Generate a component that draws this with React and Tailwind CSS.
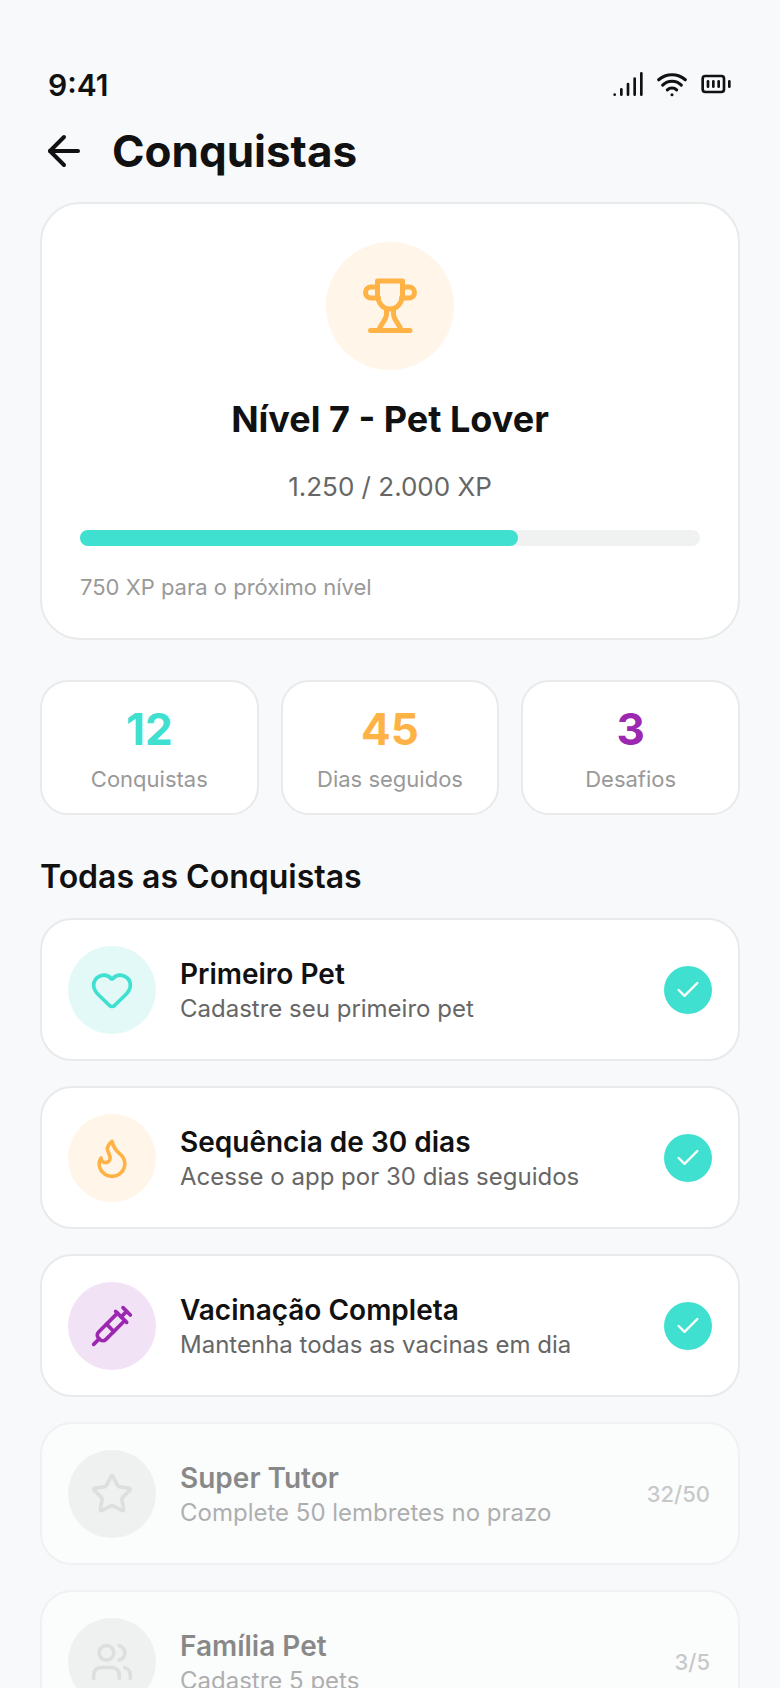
import React from 'react';
import { ArrowLeft, BatteryFull, Check, Flame, Heart, Signal, Star, Syringe, Users, Wifi } from 'lucide-react';

const stats = [
  { value: '12', label: 'Conquistas', color: 'text-[#40e0d0]' },
  { value: '45', label: 'Dias seguidos', color: 'text-[#ffb347]' },
  { value: '3', label: 'Desafios', color: 'text-[#9c27b0]' },
];

const achievements = [
  { title: 'Primeiro Pet', text: 'Cadastre seu primeiro pet', Icon: Heart, circle: 'bg-[#e3f9f7]', tint: 'text-[#40e0d0]' },
  { title: 'Sequência de 30 dias', text: 'Acesse o app por 30 dias seguidos', Icon: Flame, circle: 'bg-[#fff5e8]', tint: 'text-[#ffb347]' },
  { title: 'Vacinação Completa', text: 'Mantenha todas as vacinas em dia', Icon: Syringe, circle: 'bg-[#f1e2f5]', tint: 'text-[#9c27b0]' },
  { title: 'Super Tutor', text: 'Complete 50 lembretes no prazo', Icon: Star, progress: '32/50' },
  { title: 'Família Pet', text: 'Cadastre 5 pets', Icon: Users, progress: '3/5' },
];

// lucide's trophy is wider than the one in the design
const TrophyIcon = () => (
  <svg width="80" height="80" viewBox="0 1 80 80" fill="none" stroke="#ffb347" strokeWidth="5" strokeLinecap="round" strokeLinejoin="round">
    <path d="M27.5 16H52.5V29C52.5 38 47 44 40 44C33 44 27.5 38 27.5 29Z" />
    <path d="M27.5 22H21A5.5 5.5 0 0 0 21 33H28.5" />
    <path d="M52.5 22H59A5.5 5.5 0 0 1 59 33H51.5" />
    <path d="M36.5 45V49C36.5 54 32 58 29.5 63.5" />
    <path d="M43.5 45V49C43.5 54 48 58 50.5 63.5" />
    <path d="M20.5 65.5H60" />
  </svg>
);

const AchievementRow = ({ title, text, Icon, circle, tint, progress }) => (
  <div className={`flex items-center gap-6 rounded-[32px] border-2 border-[#e8eaeb] bg-white px-[26px] h-[143px] shrink-0 ${progress ? 'opacity-50' : ''}`}>
    <div className={`flex h-[88px] w-[88px] shrink-0 items-center justify-center rounded-full ${progress ? 'bg-[#e8e8e8]' : circle}`}>
      <Icon size={44} strokeWidth={2} className={progress ? 'text-[#c4c4c4]' : tint} />
    </div>
    <div className="flex-1 min-w-0 pt-[2px]">
      <div className={`text-[28px] leading-[36px] font-semibold ${progress ? 'text-[#1a1a1a]' : 'text-[#111111]'}`}>{title}</div>
      <div className="text-[24px] leading-[34px] text-[#666666]">{text}</div>
    </div>
    {progress ? (
      <div className="pt-[2px] pr-[2px] text-[22px] font-medium text-[#999999]">{progress}</div>
    ) : (
      <div className="flex h-12 w-12 shrink-0 items-center justify-center rounded-full bg-[#40e0d0]">
        <Check size={28} strokeWidth={2} className="text-white" />
      </div>
    )}
  </div>
);

const App = () => {
  return (
    <div className="h-[1688px] w-[780px] overflow-hidden bg-[#f8f9fa] font-['Inter',sans-serif] text-[#111111]">
      <div className="flex items-center justify-between px-12 pt-[64px] h-[106px]">
        <span className="text-[30px] leading-[36px] font-semibold">9:41</span>
        <div className="flex items-center gap-3 -mt-[2px]">
          <Signal size={32} strokeWidth={2} />
          <Wifi size={32} strokeWidth={2.3} />
          <BatteryFull size={32} strokeWidth={2} />
        </div>
      </div>

      <div className="flex items-center gap-6 px-10 h-[70px] mt-[10px]">
        <ArrowLeft size={48} strokeWidth={2} />
        <h1 className="text-[44px] leading-[56px] font-bold">Conquistas</h1>
      </div>

      <div className="flex flex-col px-10 mt-4">
        <div className="flex flex-col items-center rounded-[40px] border-2 border-[#e8eaeb] bg-white px-[38px] pt-[38px] h-[438px]">
          <div className="flex h-32 w-32 items-center justify-center rounded-full bg-[#fff5e8]">
            <TrophyIcon />
          </div>
          <h2 className="mt-[27px] text-[36px] leading-[44px] font-bold">Nível 7 - Pet Lover</h2>
          <p className="mt-[29px] text-[26px] leading-[34px] text-[#666666]">1.250 / 2.000 XP</p>
          <div className="mt-[26px] h-4 w-full rounded-lg bg-[#f0f1f1]">
            <div className="h-4 w-[438px] rounded-lg bg-[#40e0d0]" />
          </div>
          <p className="mt-[26px] w-full text-[22px] leading-[30px] text-[#999999]">750 XP para o próximo nível</p>
        </div>

        <div className="mt-10 grid grid-cols-3 gap-[22px]">
          {stats.map((stat) => (
            <div key={stat.label} className="flex h-[135px] flex-col items-center justify-center rounded-[28px] border-2 border-[#e8eaeb] bg-white">
              <div className={`text-[44px] leading-[52px] font-bold ${stat.color}`}>{stat.value}</div>
              <div className="mt-[10px] text-[22px] leading-[28px] text-[#999999]">{stat.label}</div>
            </div>
          ))}
        </div>

        <h3 className="mt-[42px] text-[32px] leading-[40px] font-semibold">Todas as Conquistas</h3>

        <div className="mt-[21px] flex flex-col gap-[25px]">
          {achievements.map((item) => (
            <AchievementRow key={item.title} {...item} />
          ))}
        </div>
      </div>
    </div>
  );
};

export default App;
